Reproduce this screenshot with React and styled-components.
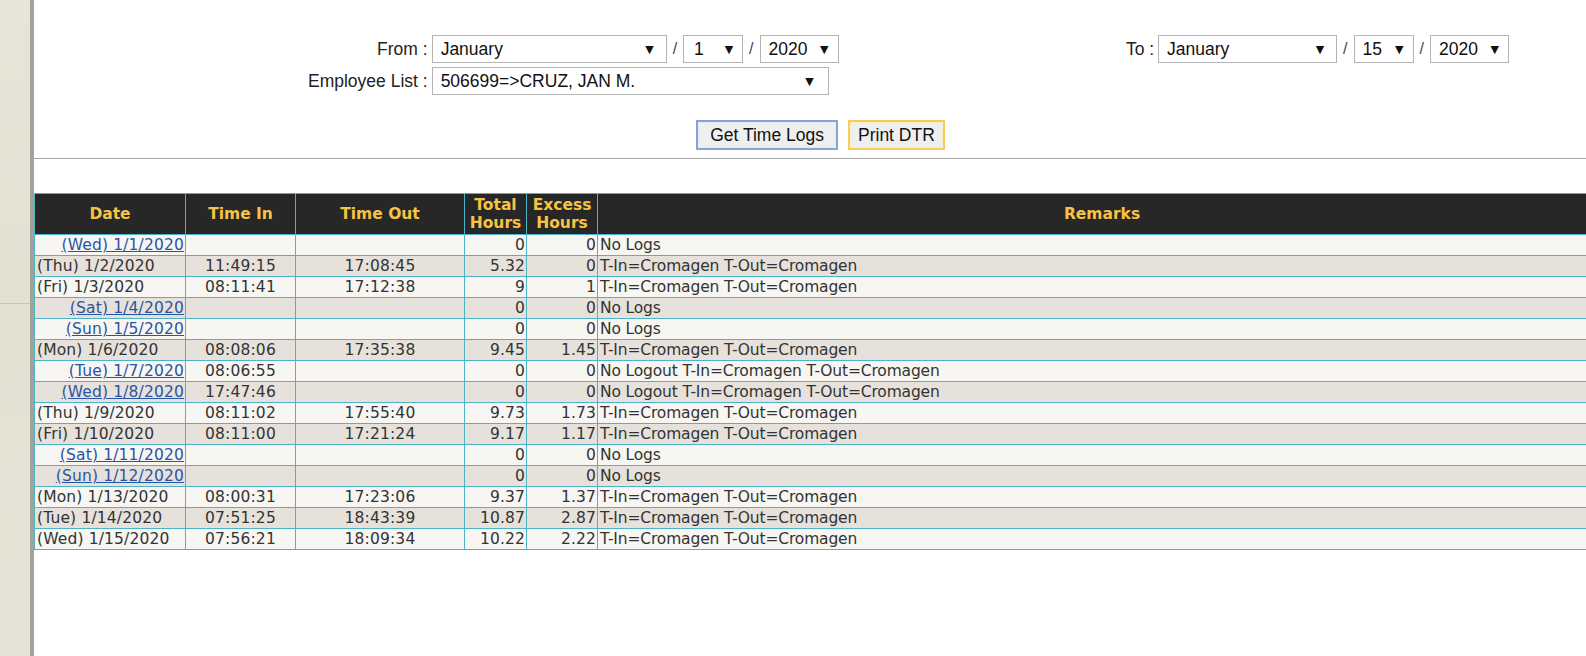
import React from 'react';
import styled, { createGlobalStyle } from 'styled-components';

const GlobalStyle = createGlobalStyle`
  html, body {
    margin: 0;
    padding: 0;
    background: #fff;
    overflow: hidden;
  }
`;

const Page = styled.div`
  display: flex;
  min-height: 656px;
`;

const SideStrip = styled.div`
  flex: 0 0 30px;
  background: linear-gradient(180deg, #e8e4d7 0%, #e4e0d2 45%, #e7e3d6 100%);
  border-right: 4px solid #a3a19a;
  display: flex;
  flex-direction: column;
`;

const StripMark = styled.div`
  margin-top: 303px;
  height: 1px;
  background: #c9c5b9;
`;

const Main = styled.div`
  flex: 0 0 1573px;
  width: 1573px;
`;

const FilterArea = styled.div`
  height: 159px;
  box-sizing: border-box;
  padding-top: 35px;
  border-bottom: 1px solid #a8a8a8;
  font-family: 'Liberation Sans', Arial, sans-serif;
  font-size: 17.5px;
  color: #222;
`;

const FilterRow = styled.div`
  display: flex;
  align-items: flex-start;
`;

const FromGrid = styled.div`
  display: grid;
  grid-template-columns: auto auto;
  column-gap: 4px;
  row-gap: 4px;
  margin-left: 274px;
`;

const ToBlock = styled.div`
  display: flex;
  align-items: center;
  gap: 4px;
  margin-left: auto;
  margin-right: 98px;
`;

const Label = styled.div`
  text-align: right;
  line-height: 28px;
  height: 28px;
`;

const Fields = styled.div`
  display: flex;
  align-items: center;
`;

const SelectBox = styled.div`
  position: relative;
  box-sizing: border-box;
  width: ${(p) => p.$w}px;
  height: 28px;
  border: 1px solid #b4b4b4;
  background: #fff;
`;

const Select = styled.select`
  appearance: none;
  -webkit-appearance: none;
  box-sizing: border-box;
  width: 100%;
  height: 100%;
  border: none;
  background: transparent;
  font-family: 'Liberation Sans', Arial, sans-serif;
  font-size: 17.5px;
  color: #111;
  padding: 0 0 0 ${(p) => p.$pad || 8}px;
  outline: none;
`;

const Arrow = styled.span`
  position: absolute;
  right: ${(p) => p.$right || 10}px;
  top: 50%;
  transform: translateY(-50%);
  font-size: 11px;
  color: #111;
  pointer-events: none;
  font-family: 'DejaVu Sans', sans-serif;
`;

const Slash = styled.span`
  color: #444;
  font-size: 16px;
  margin: 0 6px;
`;

const ButtonRow = styled.div`
  display: flex;
  justify-content: center;
  gap: 10px;
  margin-top: 25px;
`;

const Button = styled.button`
  box-sizing: border-box;
  height: 30px;
  padding: 0 ${(p) => p.$pad}px;
  background: #efefef;
  border: 2px solid ${(p) => p.$border};
  box-shadow: inset 0 0 0 1px ${(p) => p.$inner};
  font-family: 'Liberation Sans', Arial, sans-serif;
  font-size: 17.5px;
  color: #111;
  cursor: pointer;
`;

const Table = styled.table`
  margin-top: 34px;
  width: 100%;
  border-collapse: collapse;
  table-layout: fixed;
  font-family: 'DejaVu Sans', Verdana, sans-serif;
  font-size: 15.5px;
  letter-spacing: 0.15px;
  color: #333;
`;

const Th = styled.th`
  background: #272727;
  color: #f6c343;
  font-weight: bold;
  height: 40px;
  padding: 0;
  line-height: 18px;
  letter-spacing: 0;
  border: 1px solid #4cb4c4;
  text-align: center;
`;

const Tr = styled.tr`
  background: ${(p) => (p.$alt ? '#e7e1db' : '#f7f6f2')};
`;

const Td = styled.td`
  height: 20px;
  padding: 0 ${(p) => (p.$align === 'right' ? 1 : 2)}px 0 2px;
  line-height: 20px;
  border: 1px solid #4cb4c4;
  text-align: ${(p) => p.$align || 'left'};
  letter-spacing: ${(p) => (p.$tight ? '-0.15px' : 'inherit')};
  white-space: nowrap;
  overflow: hidden;
`;

const DateLink = styled.a`
  color: #2b55a3;
  text-decoration: underline;
`;

const months = ['January', 'February', 'March', 'April', 'May', 'June', 'July', 'August', 'September', 'October', 'November', 'December'];

const logs = [
  { date: '(Wed) 1/1/2020', link: true, tin: '', tout: '', total: '0', excess: '0', remarks: 'No Logs' },
  { date: '(Thu) 1/2/2020', tin: '11:49:15', tout: '17:08:45', total: '5.32', excess: '0', remarks: 'T-In=Cromagen T-Out=Cromagen' },
  { date: '(Fri) 1/3/2020', tin: '08:11:41', tout: '17:12:38', total: '9', excess: '1', remarks: 'T-In=Cromagen T-Out=Cromagen' },
  { date: '(Sat) 1/4/2020', link: true, tin: '', tout: '', total: '0', excess: '0', remarks: 'No Logs' },
  { date: '(Sun) 1/5/2020', link: true, tin: '', tout: '', total: '0', excess: '0', remarks: 'No Logs' },
  { date: '(Mon) 1/6/2020', tin: '08:08:06', tout: '17:35:38', total: '9.45', excess: '1.45', remarks: 'T-In=Cromagen T-Out=Cromagen' },
  { date: '(Tue) 1/7/2020', link: true, tin: '08:06:55', tout: '', total: '0', excess: '0', remarks: 'No Logout T-In=Cromagen T-Out=Cromagen' },
  { date: '(Wed) 1/8/2020', link: true, tin: '17:47:46', tout: '', total: '0', excess: '0', remarks: 'No Logout T-In=Cromagen T-Out=Cromagen' },
  { date: '(Thu) 1/9/2020', tin: '08:11:02', tout: '17:55:40', total: '9.73', excess: '1.73', remarks: 'T-In=Cromagen T-Out=Cromagen' },
  { date: '(Fri) 1/10/2020', tin: '08:11:00', tout: '17:21:24', total: '9.17', excess: '1.17', remarks: 'T-In=Cromagen T-Out=Cromagen' },
  { date: '(Sat) 1/11/2020', link: true, tin: '', tout: '', total: '0', excess: '0', remarks: 'No Logs' },
  { date: '(Sun) 1/12/2020', link: true, tin: '', tout: '', total: '0', excess: '0', remarks: 'No Logs' },
  { date: '(Mon) 1/13/2020', tin: '08:00:31', tout: '17:23:06', total: '9.37', excess: '1.37', remarks: 'T-In=Cromagen T-Out=Cromagen' },
  { date: '(Tue) 1/14/2020', tin: '07:51:25', tout: '18:43:39', total: '10.87', excess: '2.87', remarks: 'T-In=Cromagen T-Out=Cromagen' },
  { date: '(Wed) 1/15/2020', tin: '07:56:21', tout: '18:09:34', total: '10.22', excess: '2.22', remarks: 'T-In=Cromagen T-Out=Cromagen' },
];

const Dropdown = ({ width, value, options, pad, arrowRight }) => (
  <SelectBox $w={ width }>
    <Select $pad={ pad } defaultValue={ value }>
      { options.map((o) => <option key={ o } value={ o }>{ o }</option>) }
    </Select>
    <Arrow $right={ arrowRight }>▼</Arrow>
  </SelectBox>
);

const days = Array.from({ length: 31 }, (_, i) => String(i + 1));
const years = ['2019', '2020', '2021'];

const DatePicker = ({ month, day, year, monthWidth }) => (
  <Fields>
    <Dropdown width={ monthWidth } value={ month } options={ months } arrowRight={ 12 } />
    <Slash>/</Slash>
    <Dropdown width={ 60 } value={ day } options={ days } pad={ day.length > 1 ? 8 : 10 } arrowRight={ 9 } />
    <Slash>/</Slash>
    <Dropdown width={ 79 } value={ year } options={ years } arrowRight={ 9 } />
  </Fields>
);

export default function App() {
  return (
    <>
      <GlobalStyle />
      <Page>
        <SideStrip>
          <StripMark />
        </SideStrip>
        <Main>
          <FilterArea>
            <FilterRow>
              <FromGrid>
                <Label>From :</Label>
                <DatePicker month="January" day="1" year="2020" monthWidth={ 235 } />
                <Label>Employee List :</Label>
                <Fields>
                  <Dropdown width={ 397 } value="506699=>CRUZ, JAN M." options={ ['506699=>CRUZ, JAN M.'] } arrowRight={ 14 } />
                </Fields>
              </FromGrid>
              <ToBlock>
                <Label>To :</Label>
                <DatePicker month="January" day="15" year="2020" monthWidth={ 179 } />
              </ToBlock>
            </FilterRow>
            <ButtonRow>
              <Button $pad={ 12 } $border="#86a6d2" $inner="#e3ebf6">Get Time Logs</Button>
              <Button $pad={ 8 } $border="#f6cd5c" $inner="#fbeecb">Print DTR</Button>
            </ButtonRow>
          </FilterArea>

          <Table>
            <colgroup>
              <col style={ { width: 151 } } />
              <col style={ { width: 110 } } />
              <col style={ { width: 169 } } />
              <col style={ { width: 62 } } />
              <col style={ { width: 71 } } />
              <col />
            </colgroup>
            <thead>
              <tr>
                <Th>Date</Th>
                <Th>Time In</Th>
                <Th>Time Out</Th>
                <Th>Total<br />Hours</Th>
                <Th>Excess<br />Hours</Th>
                <Th>Remarks</Th>
              </tr>
            </thead>
            <tbody>
              { logs.map((r, i) => (
                <Tr key={ r.date } $alt={ i % 2 === 1 }>
                  <Td $align={ r.link ? 'right' : 'left' }>
                    { r.link ? <DateLink href="#">{ r.date }</DateLink> : r.date }
                  </Td>
                  <Td $align="center">{ r.tin }</Td>
                  <Td $align="center">{ r.tout }</Td>
                  <Td $align="right">{ r.total }</Td>
                  <Td $align="right">{ r.excess }</Td>
                  <Td $tight>{ r.remarks }</Td>
                </Tr>
              )) }
            </tbody>
          </Table>
        </Main>
      </Page>
    </>
  );
}
